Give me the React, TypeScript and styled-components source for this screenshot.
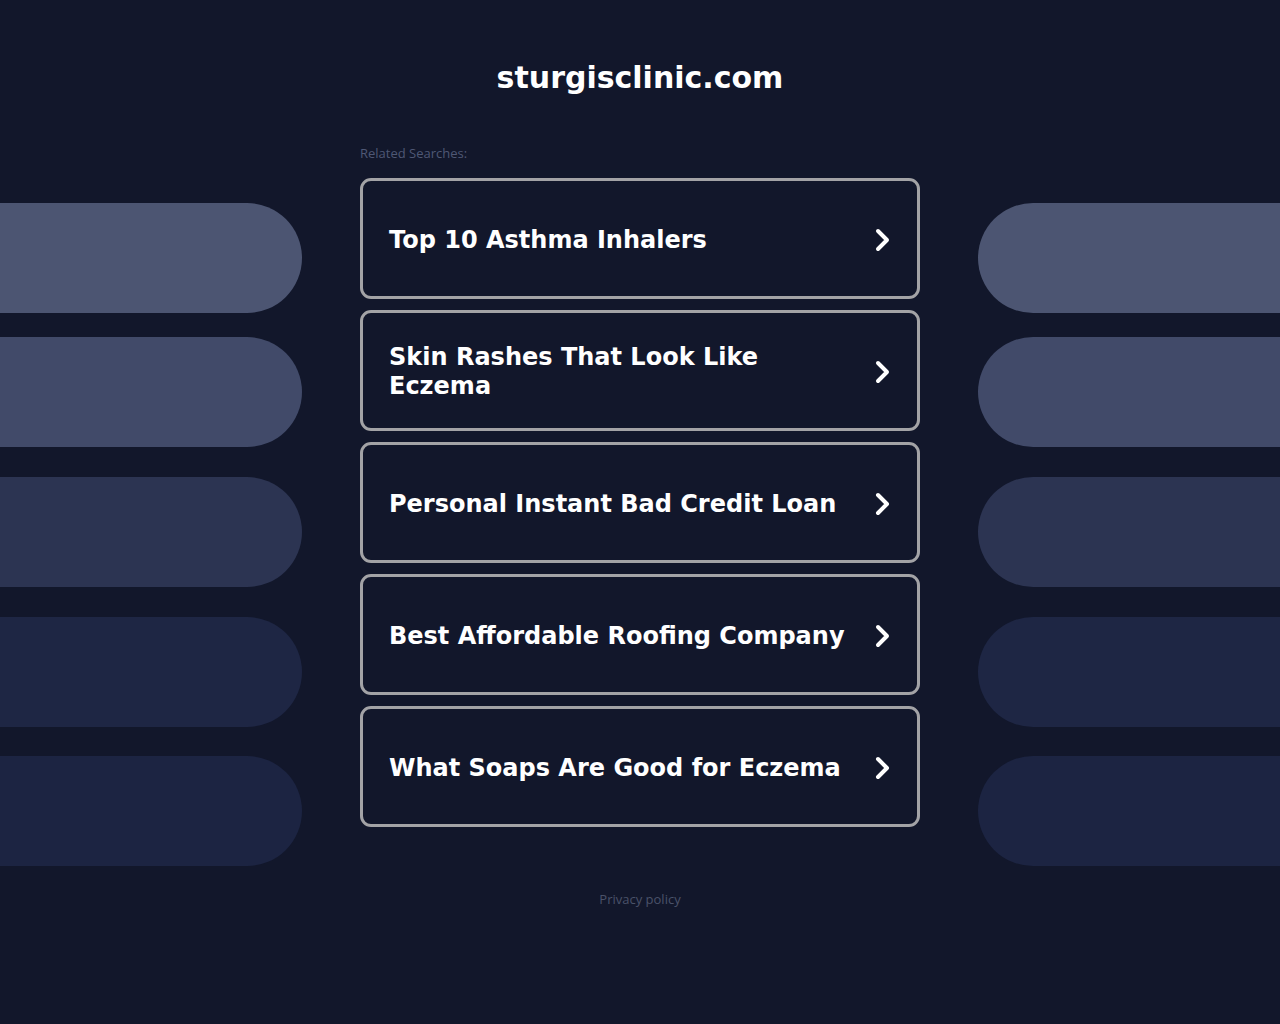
import React from "react";
import styled, { createGlobalStyle } from "styled-components";

const Global = createGlobalStyle`
  html, body { margin: 0; padding: 0; background: #12172b; }
  body { font-family: "DejaVu Sans", "Liberation Sans", sans-serif; }
`;

const Page = styled.div`
  min-height: 1024px;
  background: #12172b;
  display: flex;
  flex-direction: column;
  align-items: stretch;
`;

const Title = styled.h1`
  margin: 0;
  padding-top: 57px;
  height: 41px;
  text-align: center;
  color: #ffffff;
  font-size: 30px;
  font-weight: 700;
  line-height: 41px;
`;

const LabelRow = styled.div`
  width: 560px;
  margin: 46px auto 0;
  height: 34px;
`;

const Label = styled.span`
  display: block;
  color: #4f5875;
  font-family: "Open Sans", "DejaVu Sans", sans-serif;
  font-size: 13px;
  line-height: 18px;
`;

const Grid = styled.div`
  display: grid;
  grid-template-columns: 1fr 560px 1fr;
  column-gap: 58px;
`;

const Side = styled.div`
  display: flex;
  flex-direction: column;
  gap: 30px;
  padding-top: 25px;
`;

const Pill = styled.div<{ $color: string; $side: "left" | "right"; $shift?: number }>`
  height: 110px;
  background: ${(p) => p.$color};
  border-radius: ${(p) => (p.$side === "left" ? "0 55px 55px 0" : "55px 0 0 55px")};
  margin-bottom: ${(p) => p.$shift ?? 0}px;
`;

const Cards = styled.div`
  display: flex;
  flex-direction: column;
  gap: 11px;
`;

const Card = styled.a`
  box-sizing: border-box;
  height: 121px;
  border: 3px solid #a3a3a6;
  border-radius: 11px;
  display: flex;
  align-items: center;
  justify-content: space-between;
  padding: 3px 24px 0 26px;
  color: #ffffff;
  text-decoration: none;
  cursor: pointer;
`;

const CardText = styled.span`
  flex: 0 1 auto;
  font-size: 24px;
  font-weight: 700;
  line-height: 29px;
  max-width: 462px;
`;

const Chevron = styled.svg`
  width: 20px;
  height: 30px;
  flex-shrink: 0;
`;

const Footer = styled.div`
  text-align: center;
  margin-top: 23px;
`;

const FooterLink = styled.a`
  color: #4a5269;
  font-family: "Open Sans", "DejaVu Sans", sans-serif;
  font-size: 13px;
  line-height: 18px;
  text-decoration: none;
`;

const pillColors = ["#4c5572", "#414a69", "#2c3452", "#1e2644", "#1c2442"];
const pillShifts = [-6, 0, 0, -1, 0];
const items = [
  "Top 10 Asthma Inhalers",
  "Skin Rashes That Look Like Eczema",
  "Personal Instant Bad Credit Loan",
  "Best Affordable Roofing Company",
  "What Soaps Are Good for Eczema",
];

const Arrow = () => (
  <Chevron viewBox="0 0 20 30">
    <path
      d="M5 6 L14 15 L5 24"
      fill="none"
      stroke="#ffffff"
      strokeWidth="4"
      strokeLinecap="round"
      strokeLinejoin="round"
    />
  </Chevron>
);

export default function App() {
  return (
    <Page>
      <Global />
      <Title>sturgisclinic.com</Title>
      <LabelRow>
        <Label>Related Searches:</Label>
      </LabelRow>
      <Grid>
        <Side>
          {pillColors.map((c, i) => (
            <Pill key={i} $color={c} $side="left" $shift={pillShifts[i]} />
          ))}
        </Side>
        <Cards>
          {items.map((t) => (
            <Card key={t}>
              <CardText>{t}</CardText>
              <Arrow />
            </Card>
          ))}
        </Cards>
        <Side>
          {pillColors.map((c, i) => (
            <Pill key={i} $color={c} $side="right" $shift={pillShifts[i]} />
          ))}
        </Side>
      </Grid>
      <Footer>
        <FooterLink>Privacy policy</FooterLink>
      </Footer>
    </Page>
  );
}
